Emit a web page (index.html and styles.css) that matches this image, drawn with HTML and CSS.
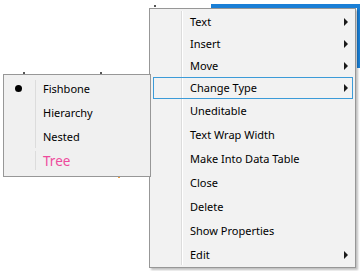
FILE: index.html
```html
<!DOCTYPE html>
<html lang="en">
<head>
    <meta charset="UTF-8">
    <title>Context Menu</title>
    <link rel="stylesheet" href="styles.css">
</head>
<body>
    <div class="desk">
        <!-- shapes behind the menus -->
        <div class="frame"></div>
        <span class="tick tick-a"></span>
        <span class="tick tick-b"></span>
        <span class="tick tick-c"></span>
        <span class="dot-orange"></span>

        <div class="menu main-menu">
            <div class="gutter"></div>
            <div class="item short">Text<span class="arrow"></span></div>
            <div class="item short">Insert<span class="arrow"></span></div>
            <div class="item short">Move<span class="arrow"></span></div>
            <div class="item short active">Change Type<span class="arrow"></span></div>
            <div class="item">Uneditable</div>
            <div class="item">Text Wrap Width</div>
            <div class="item">Make Into Data Table</div>
            <div class="item">Close</div>
            <div class="item">Delete</div>
            <div class="item">Show Properties</div>
            <div class="item">Edit<span class="arrow"></span></div>
        </div>

        <div class="menu sub-menu">
            <div class="sub-group">
                <div class="sub-item"><span class="bullet"></span>Fishbone</div>
                <div class="sub-item">Hierarchy</div>
                <div class="sub-item">Nested</div>
            </div>
            <div class="sub-group tree-group">
                <div class="sub-item tree">Tree</div>
            </div>
        </div>
    </div>
</body>
</html>
```

FILE: styles.css
```css
body {
    margin: 0;
    background: #ffffff;
    font-family: "Noto Sans", "Open Sans", Arial, sans-serif;
    font-size: 11px;
    color: #000;
}
.desk {
    position: relative;
    width: 360px;
    height: 271px;
    overflow: hidden;
    background: #ffffff;
}
.frame {
    position: absolute;
    left: 211px;
    top: 4px;
    width: 146px;
    height: 60px;
    border-top: 4px solid #1a7fd6;
    border-right: 3px solid #1a7fd6;
}
.tick {
    position: absolute;
    width: 2px;
    height: 2px;
    background: #555;
}
.tick-a { left: 154px; top: 5px; }
.tick-b { left: 23px; top: 72px; }
.tick-c { left: 100px; top: 72px; }
.dot-orange {
    position: absolute;
    left: 118px;
    top: 176px;
    width: 2px;
    height: 2px;
    background: #f0a040;
}

.menu {
    position: absolute;
    background: #f2f2f2;
    border: 1px solid #979797;
    box-sizing: border-box;
}
.main-menu {
    left: 149px;
    top: 8px;
    width: 207px;
    height: 260px;
    padding-top: 2px;
    box-shadow: 2px 2px 2px rgba(0,0,0,0.25);
}
.gutter {
    position: absolute;
    left: 31px;
    top: 2px;
    bottom: 2px;
    width: 1px;
    background: #dcdcdc;
    border-right: 1px solid #ffffff;
}
.item {
    position: relative;
    height: 24px;
    line-height: 24px;
    margin: 0 2px 0 3px;
    box-sizing: border-box;
    padding-left: 37px;
    white-space: nowrap;
}
.item.short {
    height: 22px;
    line-height: 22px;
}
.item.active {
    border: 1px solid #3c9bd8;
    padding-left: 36px;
    line-height: 20px;
}
.arrow {
    position: absolute;
    right: 5px;
    top: 50%;
    margin-top: -4px;
    width: 0;
    height: 0;
    border-top: 4px solid transparent;
    border-bottom: 4px solid transparent;
    border-left: 4px solid #1a1a1a;
}
.active .arrow {
    right: 4px;
}

.sub-menu {
    left: 3px;
    top: 74px;
    width: 148px;
    height: 103px;
    padding-top: 2px;
    background: #f0f0f0;
}
.sub-group {
    position: relative;
}
.sub-group::before {
    content: "";
    position: absolute;
    left: 31px;
    top: 3px;
    bottom: 1px;
    width: 1px;
    background: #dcdcdc;
}
.tree-group::before {
    top: 2px;
    bottom: 3px;
}
.sub-item {
    position: relative;
    height: 24px;
    line-height: 24px;
    padding-left: 39px;
}
.bullet {
    position: absolute;
    left: 11px;
    top: 8px;
    width: 7px;
    height: 7px;
    border-radius: 50%;
    background: #000;
}
.sub-item.tree {
    color: #ee4b9d;
    font-size: 13.5px;
}
```
